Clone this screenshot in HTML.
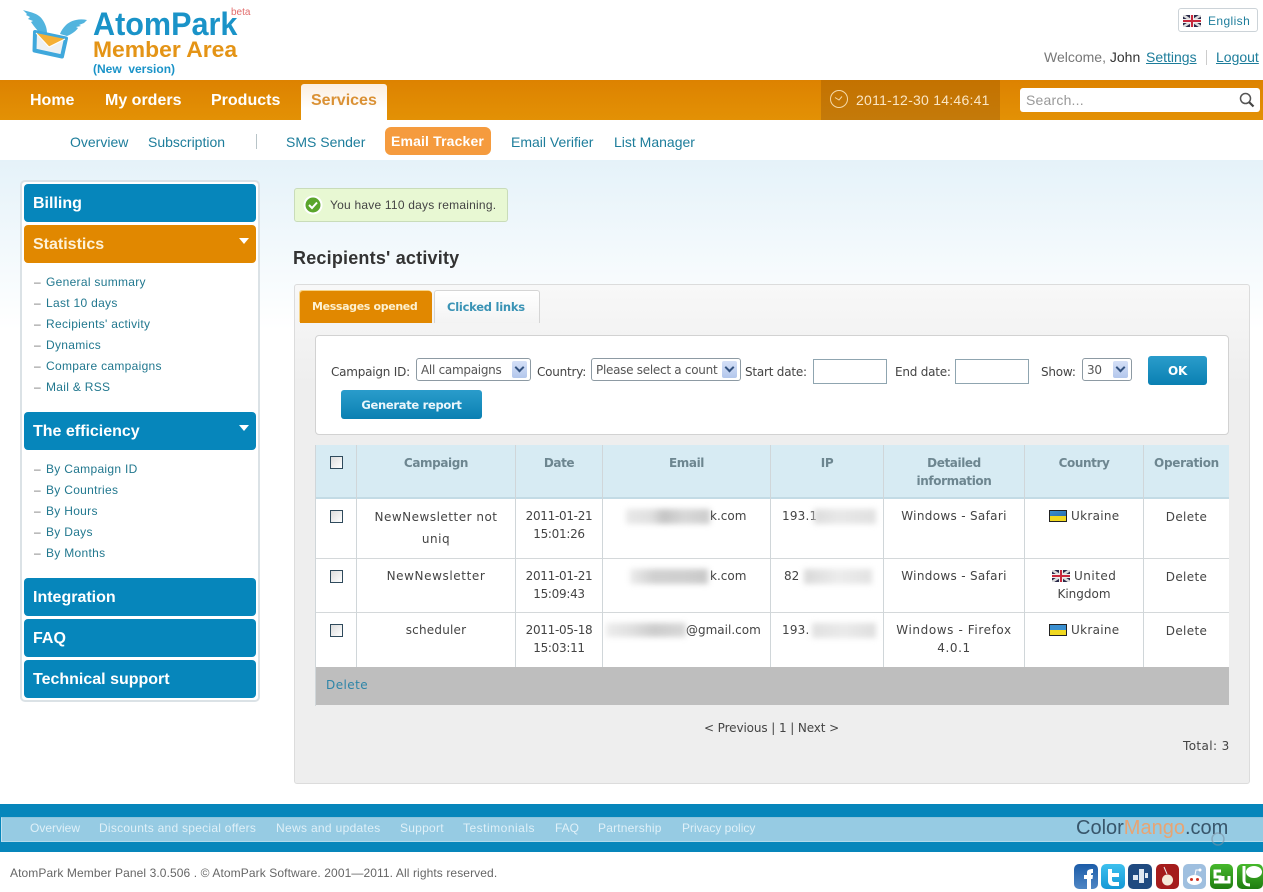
<!DOCTYPE html>
<html><head><meta charset="utf-8"><title>AtomPark Member Area</title>
<style>
html,body{margin:0;padding:0}
body{width:1263px;height:892px;position:relative;overflow:hidden;background:#fff;font-family:"Liberation Sans",sans-serif;color:#333}
.a,.t{position:absolute;white-space:nowrap}
a{text-decoration:none;color:inherit}
.nav{font:bold 16px/20px "Liberation Sans",sans-serif;color:#fff;top:91px}
.sub{font:14px/18px "Liberation Sans",sans-serif;color:#1d7d9b;top:133px}
.side{left:24px;width:223px;height:38px;padding-left:9px;background:#0686bb;border-radius:4px;color:#fff;font:bold 16px/39px "Liberation Sans",sans-serif}
.arr{position:absolute;right:7px;top:13px;width:0;height:0;border:5px solid transparent;border-top:6px solid #fff;border-bottom:0}
.si{left:46px;font:12px/14px "Liberation Sans",sans-serif;letter-spacing:.3px;color:#22788f}
.dash{left:34px;font:12px/14px "Liberation Sans",sans-serif;color:#777}
.d{font:12px/18px "DejaVu Sans",sans-serif;color:#444}
.l{letter-spacing:-.22px;top:363px}
.c{text-align:center;white-space:normal}
.h{font:bold 12px/18px "DejaVu Sans",sans-serif;color:#6d8690;text-align:center;letter-spacing:-.4px}
.sel{height:21px;border:1px solid #8d9aa3;border-radius:3px;background:#fff;font:12px/23px "DejaVu Sans",sans-serif;letter-spacing:-.28px;color:#555;overflow:hidden;padding-left:4px}
.btn{position:absolute;right:3px;top:2px;width:15px;height:17px;background:linear-gradient(#d5e0f7,#b3c7ec);border-radius:2px}
.btn:after{content:"";position:absolute;left:4px;top:3px;width:5px;height:5px;border-right:2px solid #33527f;border-bottom:2px solid #33527f;transform:rotate(45deg)}
.inp{height:23px;border:1px solid #8fa5b0;background:#fff;width:72px}
.cb{left:330px;width:11px;height:11px;border:1px solid #2f4a5c;background:linear-gradient(135deg,#dcdcdc,#fff)}
.v{width:1px;background:#d0d6d9}
.hl{left:316px;width:913px;height:1px;background:#d4d8da}
.blur{filter:blur(3px)}
.fl{font:12px/14px "Liberation Sans",sans-serif;color:#dff0f8;top:821px}
</style></head>
<body>
<!-- logo -->
<svg class="a" style="left:0;top:0" width="92" height="66" viewBox="0 0 92 66">
<path d="M23 10 C29 12 38 13 42 19 C45 23 47 28 47 33 L40 33 C36 29 33 25 31 22 L33 21 L28 19 L30 17 L26 15 L27 14 Z" fill="#52b4de"/>
<path d="M87 20 C78 18 70 21 66 25 C63 28 61 31 60 34 L67 36 C72 34 76 31 78 28 L76 27 L81 26 L79 25 L84 23 Z" fill="#52b4de"/>
<path d="M35 32 L66 38.500 L62 56.500 L34.500 50.500 Z" fill="#eef1f3" stroke="#3fa8dc" stroke-width="4" stroke-linejoin="round"/>
<path d="M36 33 L65 39 L49 47 Z" fill="#f5b035"/>
<path d="M36 33 L49 47 L65 39" fill="none" stroke="#fff" stroke-width="1"/>
</svg>
<div class="t" style="left:93px;top:6px;font:bold 32px/36px 'Liberation Sans',sans-serif;color:#1a93c8;transform:scaleX(.955);transform-origin:0 0">AtomPark</div>
<div class="t" style="left:231px;top:8px;font:10px/10px 'Liberation Sans',sans-serif;color:#e26d6d">beta</div>
<div class="t" style="left:93px;top:37px;font:bold 22px/26px 'Liberation Sans',sans-serif;color:#e49416;transform:scaleX(1.04);transform-origin:0 0">Member Area</div>
<div class="t" style="left:93px;top:62px;font:bold 12px/14px 'Liberation Sans',sans-serif;color:#1a93c8">(New&nbsp; version)</div>

<!-- top right -->
<div class="a" style="left:1178px;top:8px;width:80px;height:24px;border:1px solid #ccd3d8;border-radius:3px;box-sizing:border-box"></div>
<svg class="a" style="left:1183px;top:15px" width="18" height="12" viewBox="0 0 18 12"><rect width="18" height="12" fill="#2a2a4a"/><path d="M0 0L18 12M18 0L0 12" stroke="#ddd" stroke-width="2.500"/><path d="M9 0V12M0 6H18" stroke="#eee" stroke-width="4"/><path d="M9 0V12M0 6H18" stroke="#c8283c" stroke-width="2"/></svg>
<div class="t" style="left:1208px;top:13px;font:12px/16px 'Liberation Sans',sans-serif;color:#1d7d9b;letter-spacing:.4px">English</div>
<div class="t" style="left:1044px;top:49px;font:14px/16px 'Liberation Sans',sans-serif;color:#777">Welcome, <span style="color:#333">John</span></div>
<div class="t" style="left:1146px;top:49px;font:14px/16px 'Liberation Sans',sans-serif;color:#1d7d9b;text-decoration:underline">Settings</div>
<div class="a" style="left:1206px;top:50px;width:1px;height:15px;background:#ccc"></div>
<div class="t" style="left:1216px;top:49px;font:14px/16px 'Liberation Sans',sans-serif;color:#1d7d9b;text-decoration:underline">Logout</div>

<!-- orange bar -->
<div class="a" style="left:0;top:80px;width:1263px;height:40px;background:linear-gradient(#dd8200,#e39105)"></div>
<div class="t nav" style="left:30px">Home</div>
<div class="t nav" style="left:105px">My orders</div>
<div class="t nav" style="left:211px">Products</div>
<div class="a" style="left:301px;top:84px;width:86px;height:36px;background:linear-gradient(#fbeee0,#fff 70%);border-radius:3px 3px 0 0"></div>
<div class="t nav" style="left:311px;color:#da9134">Services</div>
<div class="a" style="left:821px;top:80px;width:179px;height:40px;background:linear-gradient(#c47200,#c47a0a)"></div>
<svg class="a" style="left:829px;top:89px" width="20" height="20" viewBox="0 0 20 20"><circle cx="10" cy="10" r="8.500" fill="none" stroke="#f5d9a8" stroke-width="1"/><path d="M6 8.500L10 11L13 7.500" fill="none" stroke="#f5d9a8"/></svg>
<div class="t" style="left:856px;top:92px;font:14px/17px 'Liberation Sans',sans-serif;color:#fbe6c4;letter-spacing:.25px">2011-12-30 14:46:41</div>
<div class="a" style="left:1020px;top:88px;width:240px;height:24px;background:#fff;border-radius:3px"></div>
<div class="t" style="left:1026px;top:92px;font:14px/17px 'Liberation Sans',sans-serif;color:#999;letter-spacing:.2px">Search...</div>
<svg class="a" style="left:1238px;top:91px" width="18" height="18" viewBox="0 0 18 18"><circle cx="7.500" cy="7.500" r="5" fill="none" stroke="#555" stroke-width="1.500"/><path d="M11 11L15.500 15.500" stroke="#444" stroke-width="2.200"/></svg>

<!-- sub nav -->
<div class="t sub" style="left:70px">Overview</div>
<div class="t sub" style="left:148px">Subscription</div>
<div class="a" style="left:256px;top:134px;width:1px;height:15px;background:#b8c4c8"></div>
<div class="t sub" style="left:286px">SMS Sender</div>
<div class="a" style="left:385px;top:127px;width:106px;height:28px;background:#f59b3e;border-radius:6px"></div>
<div class="t sub" style="left:391px;top:132px;color:#fff;font-weight:bold;letter-spacing:.15px">Email Tracker</div>
<div class="t sub" style="left:511px">Email Verifier</div>
<div class="t sub" style="left:614px">List Manager</div>

<!-- background -->
<div class="a" style="left:0;top:160px;width:1263px;height:644px;background:linear-gradient(#e5f2f9,#fff 170px)"></div>

<!-- sidebar -->
<div class="a" style="left:20px;top:180px;width:240px;height:522px;box-sizing:border-box;background:#fff;border:2px solid #dbe2e6;border-radius:5px"></div>
<div class="a side" style="top:184px">Billing</div>
<div class="a side" style="top:225px;background:#e18800;color:#fdf1d8">Statistics<div class="arr"></div></div>
<div class="a side" style="top:412px">The efficiency<div class="arr"></div></div>
<div class="a side" style="top:578px">Integration</div>
<div class="a side" style="top:619px">FAQ</div>
<div class="a side" style="top:660px">Technical support</div>
<div class="t si" style="top:275px">General summary</div><div class="t dash" style="top:275px">–</div>
<div class="t si" style="top:296px">Last 10 days</div><div class="t dash" style="top:296px">–</div>
<div class="t si" style="top:317px">Recipients' activity</div><div class="t dash" style="top:317px">–</div>
<div class="t si" style="top:338px">Dynamics</div><div class="t dash" style="top:338px">–</div>
<div class="t si" style="top:359px">Compare campaigns</div><div class="t dash" style="top:359px">–</div>
<div class="t si" style="top:380px">Mail &amp; RSS</div><div class="t dash" style="top:380px">–</div>
<div class="t si" style="top:462px">By Campaign ID</div><div class="t dash" style="top:462px">–</div>
<div class="t si" style="top:483px">By Countries</div><div class="t dash" style="top:483px">–</div>
<div class="t si" style="top:504px">By Hours</div><div class="t dash" style="top:504px">–</div>
<div class="t si" style="top:525px">By Days</div><div class="t dash" style="top:525px">–</div>
<div class="t si" style="top:546px">By Months</div><div class="t dash" style="top:546px">–</div>

<!-- notice -->
<div class="a" style="left:294px;top:188px;width:214px;height:34px;box-sizing:border-box;background:#e8f8d3;border:1px solid #c9dcb9;border-radius:3px"></div>
<svg class="a" style="left:303px;top:195px" width="20" height="20" viewBox="0 0 20 20"><circle cx="10" cy="10" r="9.500" fill="#fff"/><circle cx="10" cy="10" r="7.500" fill="#5aa52c"/><path d="M6 10L9 13L14 7.500" fill="none" stroke="#fff" stroke-width="2"/></svg>
<div class="t" style="left:330px;top:197px;font:12px/16px 'Liberation Sans',sans-serif;color:#444;letter-spacing:.22px">You have 110 days remaining.</div>

<div class="t" style="left:293px;top:248px;font:bold 18px/21px 'Liberation Sans',sans-serif;color:#333;letter-spacing:.2px">Recipients' activity</div>

<!-- panel -->
<div class="a" style="left:294px;top:284px;width:956px;height:500px;box-sizing:border-box;background:linear-gradient(#f8f8f8,#eeeeee 100px);border:1px solid #dcdcdc;border-radius:3px"></div>
<div class="a" style="left:300px;top:291px;width:132px;height:32px;background:#e18800;border-radius:3px 3px 0 0;box-shadow:-1px -1px 0 #f7d488"></div>
<div class="t" style="left:312px;top:298px;font:bold 11px/18px 'DejaVu Sans',sans-serif;color:#fdf1d0;letter-spacing:-.35px">Messages opened</div>
<div class="a" style="left:434px;top:290px;width:106px;height:33px;box-sizing:border-box;background:linear-gradient(#fff,#f3f3f3);border:1px solid #d5d5d5;border-bottom:0;border-radius:3px 3px 0 0"></div>
<div class="t" style="left:447px;top:298px;font:bold 11.500px/18px 'DejaVu Sans',sans-serif;color:#3a93b5;letter-spacing:-.25px">Clicked links</div>

<!-- filter -->
<div class="a" style="left:315px;top:335px;width:914px;height:100px;box-sizing:border-box;background:#fff;border:1px solid #d2d2d2;border-radius:4px"></div>
<div class="t d l" style="left:331px">Campaign ID:</div>
<div class="a sel" style="left:416px;top:358px;width:109px">All campaigns<div class="btn"></div></div>
<div class="t d l" style="left:537px">Country:</div>
<div class="a sel" style="left:591px;top:358px;width:144px">Please select a count<div class="btn"></div></div>
<div class="t d l" style="left:745px">Start date:</div>
<div class="a inp" style="left:813px;top:359px"></div>
<div class="t d l" style="left:895px">End date:</div>
<div class="a inp" style="left:955px;top:359px"></div>
<div class="t d l" style="left:1041px">Show:</div>
<div class="a sel" style="left:1082px;top:358px;width:44px">30<div class="btn"></div></div>
<div class="a" style="left:1148px;top:356px;width:59px;height:29px;background:linear-gradient(#2a9ccb,#0a80b2);border-radius:3px;color:#fff;font:bold 12px/31px 'DejaVu Sans',sans-serif;text-align:center;letter-spacing:-.3px">OK</div>
<div class="a" style="left:341px;top:390px;width:141px;height:29px;background:linear-gradient(#2a9ccb,#0a80b2);border-radius:3px;color:#eaf6fb;font:bold 11.500px/30px 'DejaVu Sans',sans-serif;text-align:center;letter-spacing:-.3px">Generate report</div>

<!-- table -->
<div class="a" style="left:316px;top:445px;width:913px;height:54px;background:#d7ebf3;border-bottom:2px solid #c3dbe5;box-sizing:border-box"></div>
<div class="a" style="left:316px;top:499px;width:913px;height:168px;background:#fff"></div>
<div class="a hl" style="top:558px"></div><div class="a hl" style="top:612px"></div>
<div class="a" style="left:316px;top:667px;width:913px;height:38px;background:#bebebe"></div>
<div class="a v" style="left:315px;top:445px;height:261px"></div>
<div class="a v" style="left:356px;top:445px;height:222px"></div>
<div class="a v" style="left:515px;top:445px;height:222px"></div>
<div class="a v" style="left:602px;top:445px;height:222px"></div>
<div class="a v" style="left:770px;top:445px;height:222px"></div>
<div class="a v" style="left:883px;top:445px;height:222px"></div>
<div class="a v" style="left:1024px;top:445px;height:222px"></div>
<div class="a v" style="left:1143px;top:445px;height:222px"></div>

<div class="a cb" style="top:456px"></div><div class="a cb" style="top:510px"></div><div class="a cb" style="top:570px"></div><div class="a cb" style="top:624px"></div>

<div class="a h" style="left:357px;width:158px;top:454px">Campaign</div>
<div class="a h" style="left:516px;width:86px;top:454px">Date</div>
<div class="a h" style="left:603px;width:167px;top:454px">Email</div>
<div class="a h" style="left:771px;width:112px;top:454px">IP</div>
<div class="a h" style="left:884px;width:140px;top:454px">Detailed<br>information</div>
<div class="a h" style="left:1025px;width:118px;top:454px">Country</div>
<div class="a h" style="left:1144px;width:85px;top:454px;letter-spacing:-.3px">Operation</div>

<div class="a d c" style="left:357px;width:158px;top:506px;line-height:22px;letter-spacing:.5px">NewNewsletter not<br>uniq</div>
<div class="a d c" style="left:357px;width:158px;top:567px;letter-spacing:.6px">NewNewsletter</div>
<div class="a d c" style="left:357px;width:158px;top:621px;letter-spacing:.2px">scheduler</div>
<div class="a d c" style="left:516px;width:86px;top:507px;letter-spacing:-.3px">2011-01-21<br>15:01:26</div>
<div class="a d c" style="left:516px;width:86px;top:567px;letter-spacing:-.3px">2011-01-21<br>15:09:43</div>
<div class="a d c" style="left:516px;width:86px;top:621px;letter-spacing:-.3px">2011-05-18<br>15:03:11</div>

<div class="a blur" style="left:626px;top:509px;width:84px;height:15px;background:linear-gradient(90deg,#e8e8e8,#e0e0e0 30%,#c4c4c4 45%,#d8d8d8 70%,#cccccc)"></div>
<div class="t d" style="left:710px;top:507px">k.com</div>
<div class="a blur" style="left:630px;top:569px;width:78px;height:15px;background:linear-gradient(90deg,#ececec,#d0d0d0 30%,#cfcfcf 70%,#c8c8c8)"></div>
<div class="t d" style="left:710px;top:567px">k.com</div>
<div class="a blur" style="left:606px;top:623px;width:80px;height:14px;background:linear-gradient(90deg,#ececec,#e0e0e0 30%,#cccccc 60%,#d8d8d8)"></div>
<div class="t d" style="left:686px;top:621px">@gmail.com</div>

<div class="t d" style="left:782px;top:507px;letter-spacing:.2px">193.1</div>
<div class="a blur" style="left:814px;top:509px;width:62px;height:15px;background:linear-gradient(90deg,#dcdcdc,#e8e8e8 40%,#e0e0e0)"></div>
<div class="t d" style="left:784px;top:567px">82</div>
<div class="a blur" style="left:804px;top:569px;width:68px;height:15px;background:linear-gradient(90deg,#d8d8d8,#ececec 50%,#e2e2e2)"></div>
<div class="t d" style="left:782px;top:621px;letter-spacing:.2px">193.</div>
<div class="a blur" style="left:812px;top:623px;width:64px;height:15px;background:linear-gradient(90deg,#e0e0e0,#eaeaea 50%,#dedede)"></div>

<div class="a d c" style="left:884px;width:140px;top:507px;letter-spacing:.32px">Windows - Safari</div>
<div class="a d c" style="left:884px;width:140px;top:567px;letter-spacing:.32px">Windows - Safari</div>
<div class="a d c" style="left:884px;width:140px;top:621px;letter-spacing:.6px">Windows - Firefox<br>4.0.1</div>

<svg class="a" style="left:1049px;top:510px" width="18" height="12" viewBox="0 0 18 12"><defs><linearGradient id="u" x1="0" y1="0" x2="1" y2="1"><stop offset="0" stop-color="#3a8fd0"/><stop offset="1" stop-color="#2a6fb0"/></linearGradient></defs><rect width="18" height="12" fill="#222"/><rect x="1" y="1" width="16" height="5" fill="url(#u)"/><rect x="1" y="6" width="16" height="5" fill="#f0d820"/></svg>
<div class="t d" style="left:1071px;top:507px;letter-spacing:.3px">Ukraine</div>
<svg class="a" style="left:1052px;top:570px" width="18" height="12" viewBox="0 0 18 12"><rect width="18" height="12" fill="#2a2a4a"/><path d="M0 0L18 12M18 0L0 12" stroke="#ddd" stroke-width="2.500"/><path d="M9 0V12M0 6H18" stroke="#eee" stroke-width="4"/><path d="M9 0V12M0 6H18" stroke="#c8283c" stroke-width="2"/></svg>
<div class="t d" style="left:1074px;top:567px;letter-spacing:.5px">United</div>
<div class="a d c" style="left:1025px;width:118px;top:585px">Kingdom</div>
<svg class="a" style="left:1049px;top:624px" width="18" height="12" viewBox="0 0 18 12"><rect width="18" height="12" fill="#222"/><rect x="1" y="1" width="16" height="5" fill="#3a8fd0"/><rect x="1" y="6" width="16" height="5" fill="#f0d820"/></svg>
<div class="t d" style="left:1071px;top:621px;letter-spacing:.3px">Ukraine</div>

<div class="a d c" style="left:1144px;width:85px;top:508px;letter-spacing:.35px">Delete</div>
<div class="a d c" style="left:1144px;width:85px;top:568px;letter-spacing:.35px">Delete</div>
<div class="a d c" style="left:1144px;width:85px;top:622px;letter-spacing:.35px">Delete</div>
<div class="t d" style="left:326px;top:676px;color:#2d85a8;letter-spacing:.45px">Delete</div>

<div class="t d" style="left:704px;top:719px;letter-spacing:-.1px">&lt; Previous | 1 | Next &gt;</div>
<div class="t d" style="left:1183px;top:737px;letter-spacing:.4px">Total: 3</div>

<!-- footer -->
<div class="a" style="left:0;top:804px;width:1263px;height:48px;background:#0686bb"></div>
<div class="a" style="left:1px;top:817px;width:1262px;height:25px;background:#96cbe3;box-sizing:border-box;border-left:1px solid #c1e1ef;border-bottom:1px solid #b4dbeb;border-top:1px solid #8cc3dc"></div>
<div class="t fl" style="left:30px">Overview</div>
<div class="t fl" style="left:99px;letter-spacing:.26px">Discounts and special offers</div>
<div class="t fl" style="left:276px;letter-spacing:.32px">News and updates</div>
<div class="t fl" style="left:400px;letter-spacing:.25px">Support</div>
<div class="t fl" style="left:463px;letter-spacing:.5px">Testimonials</div>
<div class="t fl" style="left:555px">FAQ</div>
<div class="t fl" style="left:598px;letter-spacing:.2px">Partnership</div>
<div class="t fl" style="left:682px">Privacy policy</div>
<div class="t" style="left:1076px;top:816px;font:20px/24px 'Liberation Sans',sans-serif;color:#38566b">Color<span style="color:#e8a472">Mango</span>.com</div>
<svg class="a" style="left:1208px;top:830px" width="20" height="20" viewBox="0 0 20 20"><circle cx="10" cy="9" r="6" fill="none" stroke="#7d93a5" stroke-width="1.500" opacity=".6"/></svg>
<div class="t" style="left:10px;top:866px;font:12px/15px 'Liberation Sans',sans-serif;color:#666;letter-spacing:.1px">AtomPark Member Panel 3.0.506 . © AtomPark Software. 2001—2011. All rights reserved.</div>

<!-- social -->
<svg class="a" style="left:1070px;top:860px" width="193" height="32" viewBox="0 0 193 32">
<defs>
<linearGradient id="f" x1="0" y1="0" x2="0" y2="1"><stop offset="0" stop-color="#1c5ca8"/><stop offset="1" stop-color="#4f86c4"/></linearGradient>
<linearGradient id="w" x1="0" y1="0" x2="0" y2="1"><stop offset="0" stop-color="#3dc0ee"/><stop offset="1" stop-color="#1498d6"/></linearGradient>
<linearGradient id="s" x1="0" y1="0" x2="0" y2="1"><stop offset="0" stop-color="#46b82c"/><stop offset="1" stop-color="#1f7d10"/></linearGradient>
</defs>
<rect x="4" y="4" width="24" height="25" rx="5" fill="url(#f)"/><path d="M17 29V19H14V15H17V12.500C17 10 19 9 23 9V13C21 13 21 13.500 21 15H23L22.500 19H21V29Z" fill="#fff"/>
<rect x="31" y="4" width="24" height="25" rx="5" fill="url(#w)"/><path d="M38 9H42V13H49V17H42V20C42 21 43 22 44 22H49V26H43C40 26 38 24 38 21Z" fill="#fff"/>
<rect x="58" y="4" width="24" height="25" rx="5" fill="#1f4a80"/><rect x="69" y="9" width="5" height="14" fill="#dfe8f2"/><rect x="63" y="15" width="5" height="5" fill="#dfe8f2"/><rect x="75" y="13" width="3" height="5" fill="#dfe8f2"/>
<rect x="86" y="4" width="23" height="25" rx="5" fill="#a51c1c"/><circle cx="97.500" cy="20" r="5.500" fill="#f6e9d8"/><path d="M97 14L94 7" stroke="#eee" stroke-width="1"/>
<rect x="113" y="4" width="23" height="25" rx="5" fill="#9fbfdf"/><ellipse cx="124.500" cy="20" rx="7.500" ry="5" fill="#fff"/><circle cx="121.500" cy="19.500" r="1.500" fill="#d03020"/><circle cx="127.500" cy="19.500" r="1.500" fill="#d03020"/><circle cx="130" cy="10" r="1.500" fill="#fff"/><path d="M125 15L126 10L130 10" stroke="#fff" fill="none"/>
<rect x="140" y="4" width="23" height="25" rx="5" fill="url(#s)"/><path d="M151 11H145V17H150V22H144M153 16V22H159V16" fill="none" stroke="#fff" stroke-width="3"/>
<rect x="167" y="4" width="26" height="25" rx="5" fill="url(#s)"/><ellipse cx="184" cy="12" rx="8" ry="6" fill="#fff"/><path d="M174 6V20C174 24 176 25 180 25" stroke="#fff" stroke-width="3" fill="none"/>
</svg>
</body></html>
